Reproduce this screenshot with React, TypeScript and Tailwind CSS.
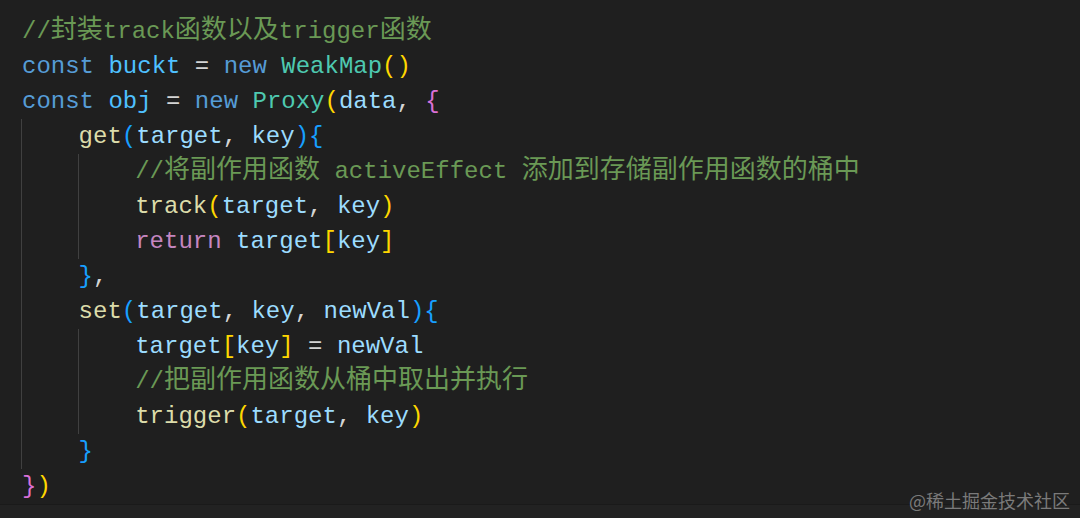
import React from 'react';

// VS Code Dark+ palette
const C = {
  comment: 'text-[#6a9955]',
  kw: 'text-[#569cd6]',
  ctrl: 'text-[#c586c0]',
  cvar: 'text-[#4fc1ff]',
  v: 'text-[#9cdcfe]',
  cls: 'text-[#4ec9b0]',
  fn: 'text-[#dcdcaa]',
  p: 'text-[#d4d4d4]',
  gold: 'text-[#ffd700]',
  pink: 'text-[#da70d6]',
  blue: 'text-[#179fff]',
};

type Tok = [string, string];

const lines: { indent: number; guides: number; toks: Tok[] }[] = [
  { indent: 0, guides: 0, toks: [['//封装track函数以及trigger函数', C.comment]] },
  {
    indent: 0,
    guides: 0,
    toks: [
      ['const', C.kw], [' ', C.p], ['buckt', C.cvar], [' = ', C.p], ['new', C.kw], [' ', C.p],
      ['WeakMap', C.cls], ['()', C.gold],
    ],
  },
  {
    indent: 0,
    guides: 0,
    toks: [
      ['const', C.kw], [' ', C.p], ['obj', C.cvar], [' = ', C.p], ['new', C.kw], [' ', C.p],
      ['Proxy', C.cls], ['(', C.gold], ['data', C.v], [', ', C.p], ['{', C.pink],
    ],
  },
  {
    indent: 1,
    guides: 1,
    toks: [['get', C.fn], ['(', C.blue], ['target', C.v], [', ', C.p], ['key', C.v], [')', C.blue], ['{', C.blue]],
  },
  { indent: 2, guides: 2, toks: [['//将副作用函数 activeEffect 添加到存储副作用函数的桶中', C.comment]] },
  {
    indent: 2,
    guides: 2,
    toks: [['track', C.fn], ['(', C.gold], ['target', C.v], [', ', C.p], ['key', C.v], [')', C.gold]],
  },
  {
    indent: 2,
    guides: 2,
    toks: [['return', C.ctrl], [' ', C.p], ['target', C.v], ['[', C.gold], ['key', C.v], [']', C.gold]],
  },
  { indent: 1, guides: 1, toks: [['}', C.blue], [',', C.p]] },
  {
    indent: 1,
    guides: 1,
    toks: [
      ['set', C.fn], ['(', C.blue], ['target', C.v], [', ', C.p], ['key', C.v], [', ', C.p],
      ['newVal', C.v], [')', C.blue], ['{', C.blue],
    ],
  },
  {
    indent: 2,
    guides: 2,
    toks: [['target', C.v], ['[', C.gold], ['key', C.v], [']', C.gold], [' = ', C.p], ['newVal', C.v]],
  },
  { indent: 2, guides: 2, toks: [['//把副作用函数从桶中取出并执行', C.comment]] },
  {
    indent: 2,
    guides: 2,
    toks: [['trigger', C.fn], ['(', C.gold], ['target', C.v], [', ', C.p], ['key', C.v], [')', C.gold]],
  },
  { indent: 1, guides: 1, toks: [['}', C.blue]] },
  { indent: 0, guides: 0, toks: [['}', C.pink], [')', C.gold]] },
];

// CJK glyphs in the shot are a bit wider than the mono cells
function Text({ text }: { text: string }) {
  const parts = text.split(/([\u4e00-\u9fff]+)/);
  return (
    <>
      {parts.map((s, i) =>
        /[\u4e00-\u9fff]/.test(s) ? (
          <span key={i} className="text-[26px] leading-[20px] font-['Noto_Sans_CJK_SC',sans-serif]">
            {s}
          </span>
        ) : (
          <span key={i}>{s}</span>
        )
      )}
    </>
  );
}

export default function App() {
  return (
    <div className="relative w-[1080px] h-[518px] flex flex-col bg-[#1f1f1f] overflow-hidden">
      <div className="flex-1 pt-[14px] pl-[22px] font-['Liberation_Mono','Noto_Sans_CJK_SC',monospace] text-[24px] whitespace-pre">
        {lines.map((line, i) => (
          <div key={i} className="flex h-[35px] leading-[35px]">
            {Array.from({ length: line.indent }).map((_, j) => (
              <span
                key={j}
                className={j < line.guides ? 'w-[4ch] shrink-0 border-l border-[#404040] -ml-px' : 'w-[4ch] shrink-0'}
              />
            ))}
            <span>
              {line.toks.map(([t, cls], k) => (
                <span key={k} className={cls}>
                  <Text text={t} />
                </span>
              ))}
            </span>
          </div>
        ))}
      </div>
      <div className="h-[15px] bg-[#222222] border-t border-[#1a1a1a]" />
      <div className="absolute right-[10px] bottom-[8px] text-[18px] leading-[20px] text-[#7a7a7a] font-['Noto_Sans_CJK_SC',sans-serif]">
        @稀土掘金技术社区
      </div>
    </div>
  );
}
